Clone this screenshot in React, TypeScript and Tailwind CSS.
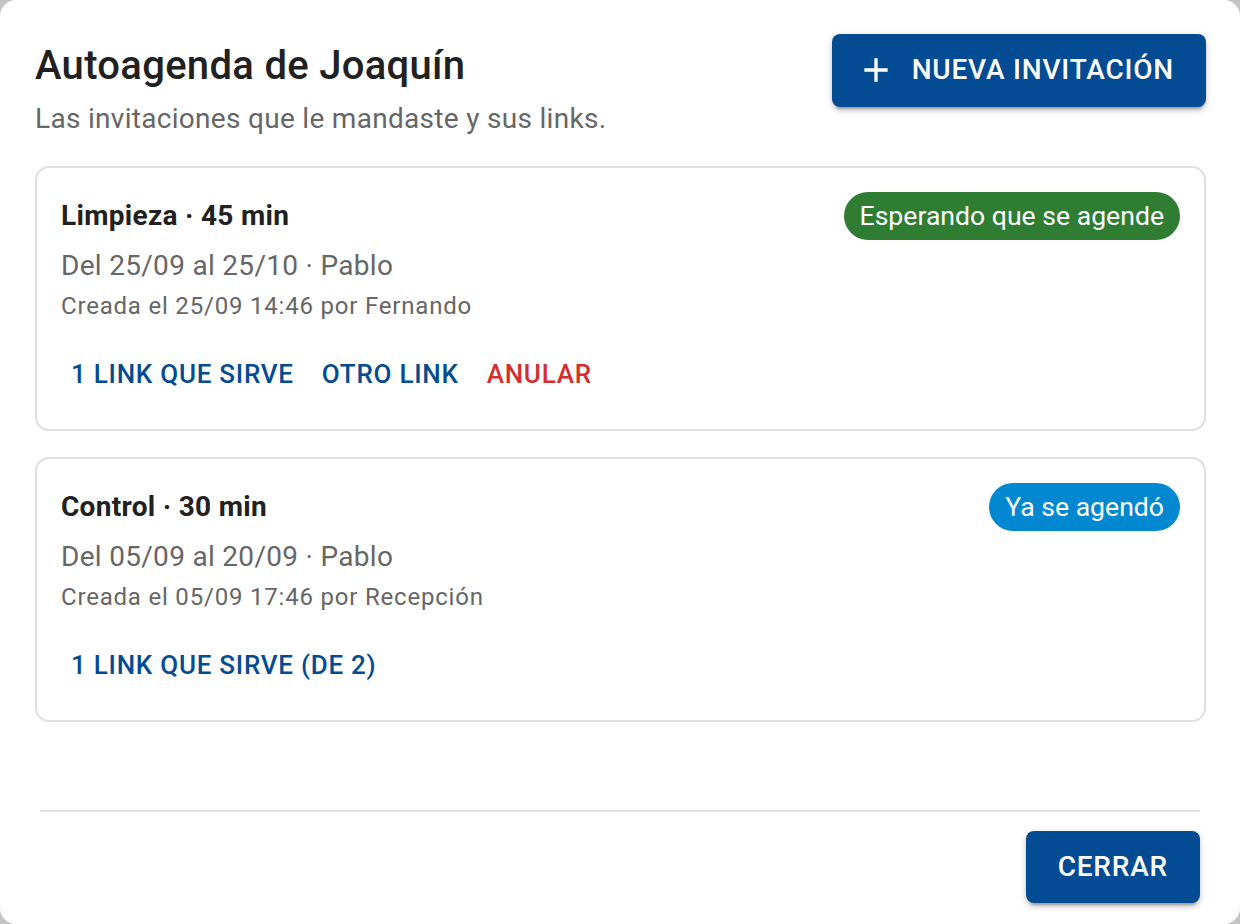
import React from 'react';

type Invitation = {
  title: string;
  range: string;
  created: string;
  status: 'pending' | 'done';
  actions: { label: string; danger?: boolean }[];
};

const INVITATIONS: Invitation[] = [
  {
    title: 'Limpieza · 45 min',
    range: 'Del 25/09 al 25/10 · Pablo',
    created: 'Creada el 25/09 14:46 por Fernando',
    status: 'pending',
    actions: [{ label: '1 link que sirve' }, { label: 'Otro link' }, { label: 'Anular', danger: true }],
  },
  {
    title: 'Control · 30 min',
    range: 'Del 05/09 al 20/09 · Pablo',
    created: 'Creada el 05/09 17:46 por Recepción',
    status: 'done',
    actions: [{ label: '1 link que sirve (de 2)' }],
  },
];

const raised =
  'shadow-[0_6px_2px_-4px_rgba(0,0,0,0.2),0_4px_4px_0_rgba(0,0,0,0.14),0_2px_10px_0_rgba(0,0,0,0.12)]';

const PlusIcon = () => (
  <svg viewBox="0 0 24 24" width="40" height="40" fill="currentColor" className="-ml-[8px] mr-[16px]">
    <path d="M19 13h-6v6h-2v-6H5v-2h6V5h2v6h6z" />
  </svg>
);

const StatusChip = ({ status }: { status: Invitation['status'] }) => (
  <span
    className={`flex h-[48px] items-center rounded-full px-[16px] text-[26.6px] leading-none text-white ${
      status === 'pending' ? 'bg-[#2e7d32]' : 'bg-[#0288d1]'
    }`}
  >
    {status === 'pending' ? 'Esperando que se agende' : 'Ya se agendó'}
  </span>
);

const InvitationCard = ({ inv }: { inv: Invitation }) => (
  <div className="rounded-[14px] border-2 border-[#e0e0e0] p-[24px]">
    <div className="flex items-center justify-between">
      <span className="text-[28px] font-bold leading-[40px] tracking-[0.3px] text-[#212121]">{inv.title}</span>
      <StatusChip status={inv.status} />
    </div>
    <p className="mt-[6px] text-[28px] leading-[40px] tracking-[0.3px] text-[#666666]">{inv.range}</p>
    <p className="text-[24px] leading-[40px] tracking-[0.8px] text-[#666666]">{inv.created}</p>
    {/* Card actions */}
    <div className="mt-[18px] flex gap-[8px]">
      {inv.actions.map((a) => (
        <button
          key={a.label}
          className={`rounded-[8px] px-[10px] py-[8px] text-[26px] font-medium uppercase leading-[45px] tracking-[0.75px] ${
            a.danger ? 'text-[#d32f2f]' : 'text-[#034b93]'
          }`}
        >
          {a.label}
        </button>
      ))}
    </div>
  </div>
);

export default function App() {
  return (
    <div className="h-[924px] w-[1240px] bg-[#c4c4c4] font-['Roboto',_'Liberation_Sans',_sans-serif]">
      <div className="flex h-full flex-col rounded-[16px] bg-white">
        <div className="px-[34px] pl-[35px] pt-[34px]">
          {/* Header */}
          <div className="flex items-start justify-between">
            <div>
              <h2 className="text-[40px] font-medium leading-[64px] tracking-[0.3px] text-[#212121]">
                Autoagenda de Joaquín
              </h2>
              <p className="mt-[1px] text-[28px] leading-[40px] tracking-[0.3px] text-[#666666]">
                Las invitaciones que le mandaste y sus links.
              </p>
            </div>
            <button
              className={`flex h-[73px] items-center rounded-[8px] bg-[#034b93] px-[32px] pb-[2px] text-[28px] font-medium uppercase tracking-[0.8px] text-white ${raised}`}
            >
              <PlusIcon />
              Nueva invitación
            </button>
          </div>

          {/* Invitations */}
          <div className="mt-[27px] flex flex-col gap-[26px]">
            {INVITATIONS.map((inv) => (
              <InvitationCard key={inv.title} inv={inv} />
            ))}
          </div>
        </div>

        {/* Footer */}
        <div className="mx-[40px] mt-auto flex justify-end border-t-2 border-[#e0e0e0] pb-[21px] pt-[19px]">
          <button
            className={`flex h-[72px] items-center rounded-[8px] bg-[#034b93] px-[32px] text-[28px] font-medium uppercase tracking-[0.8px] text-white ${raised}`}
          >
            Cerrar
          </button>
        </div>
      </div>
    </div>
  );
}
